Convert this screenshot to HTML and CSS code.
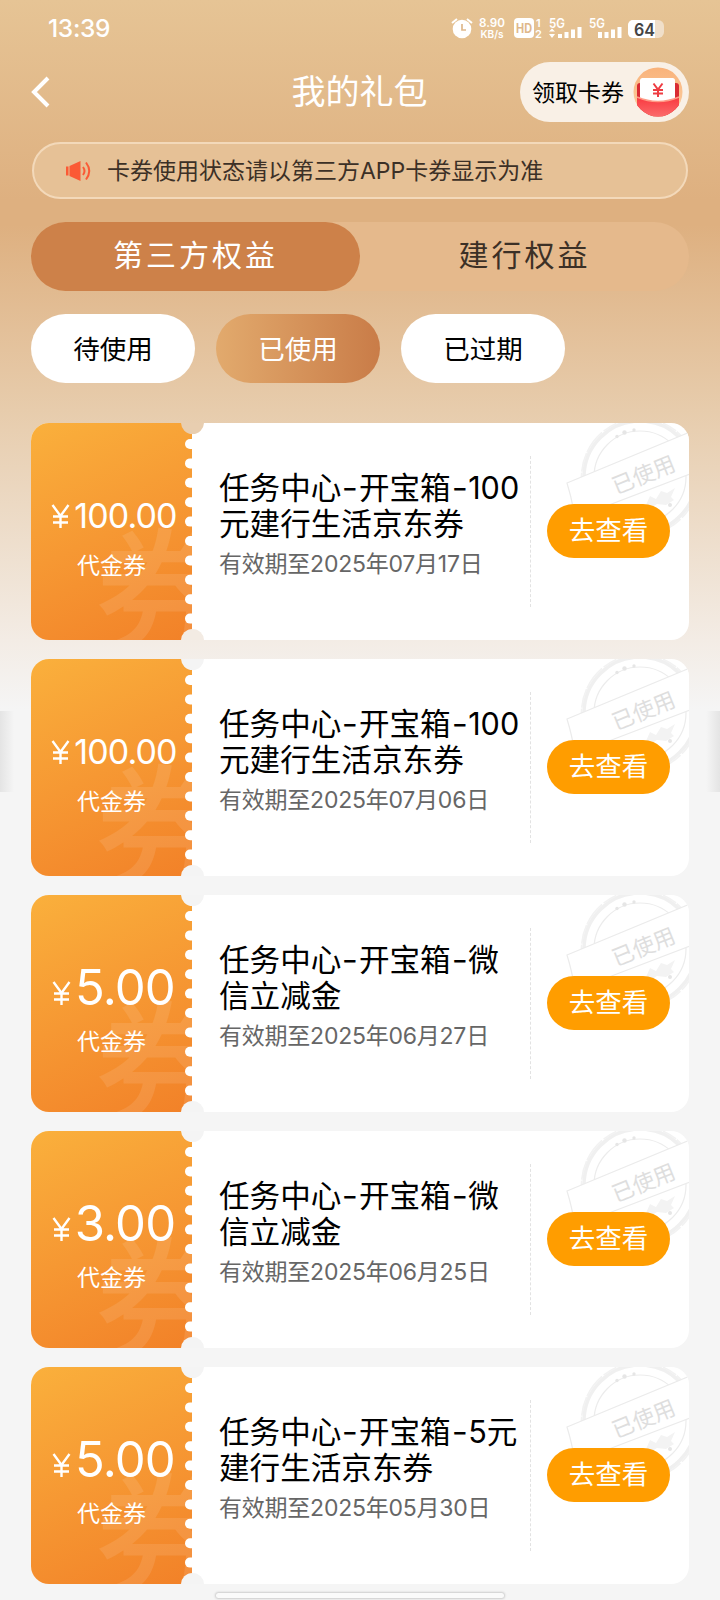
FILE: index.html
```html
<!DOCTYPE html>
<html lang="zh-CN">
<head>
<meta charset="utf-8">
<title>我的礼包</title>
<link rel="stylesheet" href="styles.css">
</head>
<body>
<svg class="defs" width="0" height="0">
  <defs>
    <clipPath id="round"><circle cx="25" cy="25" r="24.5"/></clipPath>
    <linearGradient id="peach" x1="0" y1="0" x2="0" y2="1"><stop offset="0" stop-color="#f9b27a"/><stop offset="1" stop-color="#fcd0a4"/></linearGradient>
    <linearGradient id="pocket" x1="0" y1="0" x2="0" y2="1"><stop offset="0" stop-color="#f9383f"/><stop offset="1" stop-color="#fb6c6c"/></linearGradient>
    <symbol id="stamp" viewBox="0 0 130 115">
      <g fill="none" stroke="#ececec">
        <circle cx="80" cy="54" r="56" stroke-width="3.5" stroke="#f0f0f0"/>
        <circle cx="80" cy="54" r="58.5" stroke-width="1.6" stroke-dasharray="19 1 25 2 15 1" stroke="#f2f2f2"/>
        <circle cx="80" cy="54" r="46" stroke-width="1.2"/>
      </g>
      <g fill="#e6e6e6"><circle cx="57" cy="13.500" r="1.700"/><circle cx="64.500" cy="9.500" r="2.200"/><circle cx="74" cy="7" r="1.700"/><circle cx="110" cy="82" r="2"/></g>
      <path d="M86 82l4-9 6 3 5-8 6 2 8-5-4 9 3 3-8 5-9-1-5 3z" fill="#f3f3f3"/>
      <path d="M7 60L130 9v42L15 95Q12 76 7 60z" fill="#fff" stroke="#ebebeb" stroke-width="1.2"/>
      <text x="0" y="0" transform="translate(56 71.500) rotate(-22)" class="stamp-text">已使用</text>
    </symbol>
  </defs>
</svg>
<main class="page">
  <header class="status">
    <span class="clock">13:39</span>
    <div class="status-icons">
      <svg width="214" height="24" viewBox="0 0 214 24">
        <g fill="#fff">
          <circle cx="11" cy="12" r="9.3"/>
          <path d="M1 6l5-4M21 6l-5-4" stroke="#fff" stroke-width="2"/>
          <path d="M11 7v6h4" stroke="#dfb88b" stroke-width="1.7" fill="none"/>
          <rect x="63" y="1" width="20" height="20" rx="4"/>
          <path d="M107 21v-4h4v4zM113.500 21v-6h4v6zM120 21v-8.500h4V21zM126.500 21V10h4v11z"/>
          <path d="M98 14.500h6l-3-3zM98 17h6l-3 4z"/>
          <path d="M147 21v-6h4v6zM153.500 21v-6h4v6zM160 21v-8.500h4V21zM166.500 21V10h4v11z"/>
        </g>
        <rect x="177" y="3" width="36" height="18" rx="6" fill="#f0dfca"/>
        <path d="M182 3h22v18h-22a5 5 0 0 1-5-5V8a5 5 0 0 1 5-5z" fill="#fff"/>
        <g class="status-text">
          <text x="28" y="10" font-size="12" textLength="26" lengthAdjust="spacingAndGlyphs">8.90</text>
          <text x="29.500" y="21" font-size="10.500" textLength="23" lengthAdjust="spacingAndGlyphs">KB/s</text>
          <text x="65" y="15.500" font-size="12.500" textLength="16" lengthAdjust="spacingAndGlyphs" class="hd">HD</text>
          <text x="85" y="10" font-size="11">1</text>
          <text x="84" y="21" font-size="11">2</text>
          <text x="98" y="10.500" font-size="13" textLength="16" lengthAdjust="spacingAndGlyphs">5G</text>
          <text x="138" y="10.500" font-size="13" textLength="16" lengthAdjust="spacingAndGlyphs">5G</text>
          <text x="183" y="18.500" font-size="17" textLength="21" lengthAdjust="spacingAndGlyphs" class="battery">64</text>
        </g>
      </svg>
    </div>
  </header>

  <nav class="nav">
    <svg class="back" width="20" height="32" viewBox="0 0 20 32"><path d="M17 2L3 16l14 14" fill="none" stroke="#fff" stroke-width="4"/></svg>
    <h1 class="nav-title">我的礼包</h1>
    <div class="claim">
      <span class="claim-text">领取卡券</span>
      <svg width="50" height="50" viewBox="0 0 50 50">
        <g clip-path="url(#round)">
          <rect width="50" height="50" fill="url(#peach)"/>
          <rect x="4" y="16" width="42" height="34" rx="3" fill="#d92b33"/>
          <rect x="7" y="11" width="35" height="27" rx="2.500" fill="#fff"/>
          <path d="M4 30q21 9 42 0v20H4z" fill="url(#pocket)"/>
          <path d="M4 30q21 9 42 0" fill="none" stroke="#ff9a86" stroke-width="1.500"/>
          <path d="M20.500 16.500l4.500 6 4.500-6M25 22.500V30M20 23h10M20 26.500h10" fill="none" stroke="#ee3d43" stroke-width="2"/>
        </g>
      </svg>
    </div>
  </nav>

  <div class="notice">
    <svg width="26" height="22" viewBox="0 0 26 22"><path d="M0 6.500h2.500v9H0zM3.500 6L14.500 1v20l-11-5z" fill="#fb5a35"/><path d="M17 7q3 4 0 8M20 2.500q6.500 8.500 0 17" fill="none" stroke="#fb5a35" stroke-width="2"/></svg>
    <span class="notice-text">卡券使用状态请以第三方APP卡券显示为准</span>
  </div>

  <div class="tabs"><div class="tab tab-on">第三方权益</div><div class="tab">建行权益</div></div>
  <div class="filters"><div class="chip">待使用</div><div class="chip chip-on">已使用</div><div class="chip">已过期</div></div>

  <section class="list" id="list"></section>
  <div class="edge edge-left"></div>
  <div class="edge edge-right"></div>
  <div class="home-bar"></div>
</main>
<script src="app.js"></script>
</body>
</html>
```

FILE: styles.css
```css
* { box-sizing: border-box; }
body { margin: 0; font-family: Inter, "Noto Sans CJK SC", sans-serif; font-weight: 400; color: #000; }
.defs { position: absolute; }
.page {
  position: relative; width: 720px; height: 1600px; overflow: hidden; padding: 0 31px;
  background: linear-gradient(180deg, #e6c495 0, #deb080 200px, #deb080 225px, #e7ccac 410px, #f3ece5 640px, #f5f5f5 710px);
}
.status { height: 56px; display: flex; justify-content: space-between; padding: 16px 24px 0 17px; }
.clock { color: #fff; font-size: 24.5px; line-height: 24px; font-weight: 450; letter-spacing: -0.3px; }
.status-icons { height: 24px; padding-top: 1px; }
.status-text { fill: #fff; font-weight: 600; }
.status-text .hd { fill: #dfb88b; font-weight: 700; }
.status-text .battery { fill: #444; }
.nav { height: 72px; display: grid; grid-template-columns: 168px 1fr 169px; align-items: center; }
.nav-title { margin: 0; text-align: center; color: #fff; font-size: 34px; line-height: 50px; font-weight: 400; }
.claim { height: 60px; border-radius: 30px; background: #f9f0e6; display: flex; align-items: center; padding: 0 6px 0 12px; justify-content: space-between; font-size: 23px; }
.claim-text { padding-bottom: 2px; }
.notice { margin: 14px 1px 0; height: 57px; border: 2px solid #f3d9ba; border-radius: 29px; background: #e6c196; display: flex; align-items: center; gap: 15px; padding-left: 32px; font-size: 23px; color: #3c3026; }
.notice-text { padding-bottom: 3px; }
.tabs { margin-top: 23px; height: 69px; border-radius: 35px; background: #e5b98c; display: flex; }
.tab { width: 329px; height: 69px; line-height: 66px; text-align: center; border-radius: 35px; font-size: 30px; letter-spacing: 3px; color: #3c3026; }
.tab-on { background: #cd8149; color: #fff; }
.filters { margin-top: 23px; display: flex; gap: 21px; }
.chip { width: 164px; height: 69px; line-height: 70px; border-radius: 35px; background: #fff; text-align: center; font-size: 26.5px; }
.chip-on { color: #fff; background: linear-gradient(90deg, #e2aa6d, #c97c48); }
.list { margin-top: 40px; display: grid; gap: 19px; }
.card { position: relative; height: 217px; display: flex; border-radius: 18px; background: #fff; overflow: hidden; }
.coupon { position: relative; width: 161px; height: 217px; overflow: hidden; color: #fff; background: linear-gradient(155deg, #fab03c 0%, #f69833 50%, #f28128 100%); text-align: center; display: flex; flex-direction: column; align-items: center; }
.watermark { position: absolute; left: 64px; top: 100px; font-size: 134px; line-height: 140px; font-weight: 500; color: rgba(255, 255, 255, 0.1); }
.amount { position: relative; display: flex; align-items: baseline; gap: 4px; height: 50px; margin-top: 68px; white-space: nowrap; line-height: 50px; font-size: 34px; font-weight: 400; letter-spacing: -0.9px; padding-left: 5px; }
.amount-large { font-size: 49px; height: 54px; margin-top: 66px; line-height: 54px; padding-left: 4px; letter-spacing: -0.8px; }
.kind { position: relative; font-size: 23px; line-height: 30px; margin-top: 10px; }
.amount-large + .kind { margin-top: 12px; }
.teeth { position: absolute; left: 154px; top: 16px; width: 7px; height: 190px; }
.notch { position: absolute; left: 150px; width: 23px; height: 23px; border-radius: 50%; background: #f4f4f4; }
.notch-top { top: -12px; }
.notch-bottom { bottom: -12px; }
.card:first-child .notch-top { background: #e8ceb0; }
.card:first-child .notch-bottom { background: #f3ebe3; }
.info { width: 338px; padding: 47px 0 0 27px; white-space: nowrap; }
.title { margin: 0; font-size: 30.6px; line-height: 36px; font-weight: 400; }
.dash { display: inline-block; width: 17.5px; text-align: center; transform: scaleX(1.15); }
.date { margin: 7px 0 0; font-size: 23px; line-height: 30px; letter-spacing: -0.23px; color: #666; }
.action { position: relative; flex: 1; padding: 81px 0 0 17px; }
.action::before { content: ""; position: absolute; left: 0; top: 33px; height: 151px; border-left: 1px dashed #e2e2e2; }
.stamp { position: absolute; left: 30px; top: 0; width: 130px; height: 115px; }
.stamp-text { font-size: 22px; fill: #dedede; }
.go { position: relative; width: 123px; height: 54px; line-height: 53px; border-radius: 27px; background: #ff9d00; color: #fff; text-align: center; font-size: 26.5px; }
.edge { position: absolute; top: 711px; width: 14px; height: 81px; }
.edge-left { left: 0; background: linear-gradient(90deg, #e4e4e4, #f5f5f5); }
.edge-right { right: 0; background: linear-gradient(270deg, #e4e4e4, #f5f5f5); }
.home-bar { position: absolute; left: 216px; top: 1593px; width: 288px; height: 5px; border-radius: 4px; background: #fafafa; box-shadow: 0 0 2px 1px #ccc; }
```

FILE: app.js
```js
const coupons = [
  ["100.00", "任务中心-开宝箱-100", "元建行生活京东券", "2025年07月17日"],
  ["100.00", "任务中心-开宝箱-100", "元建行生活京东券", "2025年07月06日"],
  ["5.00", "任务中心-开宝箱-微", "信立减金", "2025年06月27日"],
  ["3.00", "任务中心-开宝箱-微", "信立减金", "2025年06月25日"],
  ["5.00", "任务中心-开宝箱-5元", "建行生活京东券", "2025年05月30日"]
];
const teeth = Array.from({ length: 10 }, (_, i) =>
  `<rect x="0" y="${(i * 19.4).toFixed(1)}" width="14" height="10" rx="5"/>`).join("");
const dashes = text => text.replaceAll("-", '<span class="dash">-</span>');
document.getElementById("list").innerHTML = coupons.map(([amount, first, second, date]) => {
  const large = amount.length < 6;
  return `<article class="card">
    <div class="coupon">
      <span class="watermark">券</span>
      <div class="amount ${large ? "amount-large" : ""}">
        <svg width="19" height="24" viewBox="0 0 19 24"><path d="M1.500 1L9.500 12 17.500 1M9.500 12v12M2 12.500h15M2 18.500h15" fill="none" stroke="#fff" stroke-width="2.400"/></svg>
        <span>${amount}</span>
      </div>
      <div class="kind">代金券</div>
      <svg class="teeth" viewBox="0 0 7 190" fill="#fff">${teeth}</svg>
    </div>
    <div class="info"><h2 class="title">${dashes(first)}<br>${second}</h2><p class="date">有效期至${date}</p></div>
    <div class="action"><svg class="stamp"><use href="#stamp"/></svg><div class="go">去查看</div></div>
    <i class="notch notch-top"></i><i class="notch notch-bottom"></i>
  </article>`;
}).join("");
```
